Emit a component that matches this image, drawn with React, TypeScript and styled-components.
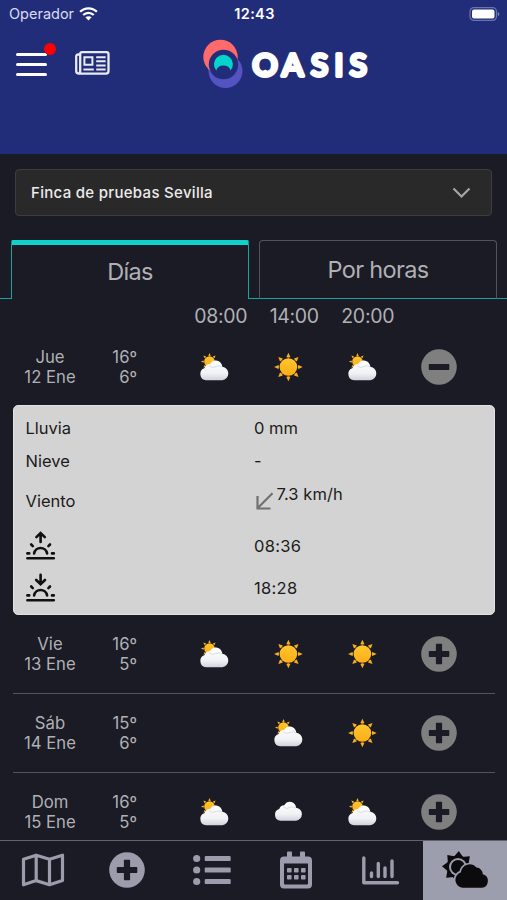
import React from "react";
import styled, { createGlobalStyle, css } from "styled-components";

const colors = {
  brand: "#222d7a",
  page: "#1a1b24",
  text: "#b0b0b5",
  cyan: "#0fd3cb",
  cyanLine: "#1ba39f",
  line: "#53535d",
  nav: "#9b9cac",
  panel: "#d3d3d3",
};

const GlobalStyle = createGlobalStyle`
  * { box-sizing: border-box; }
  body { margin: 0; background: ${colors.page}; }
  button { font: inherit; color: inherit; background: none; border: 0; padding: 0; }
  svg { display: block; }
`;

const Screen = styled.div`
  width: 507px;
  height: 900px;
  overflow: hidden;
  display: flex;
  flex-direction: column;
  background: ${colors.page};
  color: ${colors.text};
  font-family: Inter, "Liberation Sans", sans-serif;
`;

const Header = styled.header`
  height: 154px;
  flex: none;
  background: ${colors.brand};
`;

const StatusBar = styled.div`
  height: 27px;
  padding: 0 7px 0 9px;
  display: grid;
  grid-template-columns: 1fr auto 1fr;
  align-items: center;
  color: #fff;
`;

const Carrier = styled.div`
  display: flex;
  align-items: center;
  gap: 5px;
  font-size: 14.5px;
  color: #d9dcf0;
`;

const Clock = styled.div`
  font-size: 14.5px;
  font-weight: 600;
  letter-spacing: 0.35px;
`;

const BatteryBox = styled.div`
  display: flex;
  justify-content: flex-end;
`;

const Toolbar = styled.div`
  height: 74px;
  padding-left: 16px;
  display: flex;
  align-items: center;
`;

const MenuButton = styled.button`
  position: relative;
  width: 31px;
  height: 23px;
  display: flex;
  flex-direction: column;
  justify-content: space-between;
`;

const MenuLine = styled.span`
  height: 3px;
  border-radius: 2px;
  background: #fff;
`;

const Alert = styled.span`
  position: absolute;
  left: 28px;
  top: -10px;
  width: 12px;
  height: 12px;
  border-radius: 50%;
  background: #fe0002;
`;

const NewsButton = styled.button`
  margin: -2px 0 0 28px;
`;

const Logo = styled.div`
  margin-left: 90px;
`;

const Selector = styled.button`
  flex: none;
  width: 477px;
  height: 47px;
  margin: 15px 0 0 15px;
  padding: 0 20px 0 15px;
  display: flex;
  align-items: center;
  justify-content: space-between;
  border: 1px solid #3d3d3f;
  border-radius: 4px;
  background: #29292a;
`;

const SelectorText = styled.span`
  font-size: 15px;
  font-weight: 500;
  color: #ececec;
  letter-spacing: 0.3px;
`;

const TabBar = styled.div`
  flex: none;
  height: 59px;
  margin-top: 24px;
  display: flex;
`;

const TabSpace = styled.span<{ $grow?: boolean; $width?: number }>`
  ${(p) => (p.$grow ? "flex: 1;" : `width: ${p.$width}px;`)}
  border-bottom: 1px solid ${colors.cyanLine};
`;

const Tab = styled.button<{ $active?: boolean }>`
  width: 238px;
  font-size: 23.5px;
  letter-spacing: -0.65px;
  border: 1px solid ${colors.line};
  border-bottom-color: ${colors.cyanLine};
  border-radius: 4px 4px 0 0;
  ${(p) =>
    p.$active &&
    css`
      padding-bottom: 2px;
      border-color: ${colors.cyanLine};
      border-top: 5px solid ${colors.cyan};
      border-bottom: 0;
      border-radius: 2px 2px 0 0;
    `}
`;

const Hours = styled.div`
  flex: none;
  height: 30px;
  padding: 3px 0 0 184px;
  display: grid;
  grid-template-columns: repeat(3, 73.5px);
  align-items: center;
  text-align: center;
  font-size: 19.5px;
  letter-spacing: -0.3px;
`;

const Forecast = styled.div`
  flex: 1;
  min-height: 0;
  overflow: hidden;
  padding: 0 12px 0 13px;
`;

const DayRow = styled.div<{ $divided?: boolean; $first?: boolean }>`
  height: ${(p) => (p.$first ? 76 : p.$divided ? 79 : 78)}px;
  display: grid;
  grid-template-columns: 74px 50px 40px repeat(3, 74px) 80px;
  align-items: center;
  border-bottom: ${(p) => (p.$divided ? `1px solid ${colors.line}` : "0")};
`;

const Stack = styled.div<{ $right?: boolean }>`
  text-align: ${(p) => (p.$right ? "right" : "center")};
  font-size: 16.7px;
  line-height: 20.5px;
  white-space: pre-line;
`;

const Slot = styled.div`
  display: flex;
  justify-content: center;
`;

const Toggle = styled.button`
  justify-self: center;
`;

const Details = styled.section`
  height: 210px;
  padding: 5px 12px 8px 11.5px;
  border-radius: 5px;
  background: ${colors.panel};
  border: 1px solid #e2e2e4;
  color: #1b1b1b;
  font-size: 16.5px;
  display: grid;
  grid-template-columns: 228.5px 1fr;
  grid-template-rows: 33px 33px 47px 43px 42px;
  align-items: center;
`;

const Time = styled.span`
  letter-spacing: 0.3px;
`;

const Wind = styled.div`
  display: flex;
  align-items: flex-start;
  height: 33px;
  gap: 2.5px;
  letter-spacing: 0.1px;
  svg { margin-top: 8px; }
`;

const NavBar = styled.nav`
  flex: none;
  height: 60px;
  border-top: 1px solid #62626c;
  display: grid;
  grid-template-columns: repeat(6, 1fr);
`;

const NavItem = styled.button<{ $active?: boolean }>`
  display: flex;
  align-items: center;
  justify-content: center;
  padding-left: 1px;
  padding-bottom: 1px;
  color: ${(p) => (p.$active ? "#0b0b0d" : colors.nav)};
  background: ${(p) => (p.$active ? "#9c9dad" : "transparent")};
`;

const WifiIcon = () => (
  <svg width="19" height="14" viewBox="0 0 19 14" fill="none" stroke="#fff" strokeWidth="2.3">
    <path d="M1.1 4.8C5.8.1 13.2.1 17.9 4.8" />
    <path d="M4.2 8C7.2 5.1 11.8 5.1 14.8 8" />
    <path d="M9.5 13.5 6.4 10.3C8.2 8.8 10.8 8.8 12.6 10.3Z" fill="#fff" stroke="none" />
  </svg>
);

const BatteryIcon = () => (
  <svg width="31" height="14" viewBox="0 0 31 14">
    <rect x="1" y=".6" width="26.5" height="12.8" rx="4" fill="none" stroke="#6c74ab" strokeWidth="1.2" />
    <rect x="3" y="2.5" width="22.5" height="9" rx="2" fill="#fff" />
    <path d="M28.8 4.7q3 2.3 0 4.6z" fill="#8288b6" />
  </svg>
);

const NewsIcon = () => (
  <svg width="35" height="24" viewBox="0 0 35 24" fill="none" stroke="#e8eaf8" strokeWidth="2.3">
    <path d="M5 3.5H3.2Q1.2 3.5 1.2 5.5V20Q1.2 22.6 4 22.6H31Q33.5 22.6 33.5 20V3Q33.5 1.2 31.5 1.2H7Q5.2 1.2 5.2 3V20Q5.2 22.6 3.5 22.6" />
    <path d="M9.4 6.2h8v7.5h-8zM8.4 18.4h10.4M21.2 6.2h9.4M21.2 10.3h9.4M21.2 14.4h9.4M21.2 18.4h9.4" strokeWidth="2" />
  </svg>
);

const OasisLogo = () => (
  <svg width="168" height="52" viewBox="0 0 168 52">
    <circle cx="25.5" cy="33" r="17" fill="#5453c2" />
    <circle cx="20.5" cy="19" r="17.2" fill="#ff6a6c" />
    <circle cx="23.5" cy="26.5" r="14.7" fill={colors.brand} />
    <path d="M16.2 32.5A9.5 9.5 0 1 1 30.6 32.5 7.5 6.8 0 0 0 16.2 32.5Z" fill="#04d4cb" />
    <g transform="translate(-2 0) scale(1.045 1)" fill="#fff">
      <text
        y="37.6"
        x="52.2 80.5 108.2 130.7 145.2"
        fontFamily="Lato, sans-serif"
        fontWeight="400"
        fontSize="30"
        stroke="#fff"
        strokeWidth="4"
        strokeLinejoin="round"
      >
        OASIS
      </text>
      <path d="M58.4 37v-3.2q2-2.4 3.800-1 2.200-2.200 4.400 0 2-1.400 3.800 1V37z" />
    </g>
  </svg>
);

const ChevronIcon = () => (
  <svg width="19" height="12" viewBox="0 0 19 12" fill="none" stroke="#a5a5a6" strokeWidth="2.2">
    <path d="m1.5 1.5 8 8 8-8" />
  </svg>
);

const WeatherDefs = () => (
  <svg width="0" height="0">
    <defs>
      <linearGradient id="sunFill" x1="0" y1="0" x2="0" y2="1">
        <stop offset="0" stopColor="#ffc52e" />
        <stop offset="1" stopColor="#ffad16" />
      </linearGradient>
      <linearGradient id="cloudFill" x1="0" y1="0" x2="0" y2="1">
        <stop offset="0" stopColor="#ffffff" />
        <stop offset=".65" stopColor="#f1f2f5" />
        <stop offset="1" stopColor="#cfd3dc" />
      </linearGradient>
    </defs>
  </svg>
);

const SunShape = () => (
  <>
    {[0, 45, 90, 135, 180, 225, 270, 315].map((angle) => (
      <path key={angle} d="M-2 -9.9 0 -14.3 2 -9.9Q0 -8.8 -2 -9.9Z" fill="#f6ad25" transform={`rotate(${angle})`} />
    ))}
    <circle r="8.8" fill="url(#sunFill)" />
  </>
);

const CloudShape = () => (
  <>
    <path
      d="M6.6 26.7A6.2 6.2 0 0 1 5.2 14.6 5.6 5.6 0 0 1 10.4 10.6Q13.3 6.3 17.9 7.3 22 8.5 22.9 13.2A6.8 6.8 0 0 1 22.8 26.7Z"
      fill="url(#cloudFill)"
    />
    <path d="M9.5 12.3Q12.5 15.5 17.2 12.8 20.3 11.5 22.7 13.7" fill="none" stroke="#d7d9df" strokeWidth=".9" />
  </>
);

type Weather = "sun" | "partly" | "cloud" | "none";

const WeatherIcon = ({ kind }: { kind: Weather }) => {
  if (kind === "none") return null;
  return (
    <svg width="30" height="30" viewBox="0 0 30 30">
      {kind === "sun" && (
        <g transform="translate(15.4 15)">
          <SunShape />
        </g>
      )}
      {kind === "partly" && (
        <>
          <g transform="translate(10.5 9.6) scale(.6)">
            <SunShape />
          </g>
          <g transform="translate(.5 1.5)">
            <CloudShape />
          </g>
        </>
      )}
      {kind === "cloud" && (
        <g transform="translate(1.2 -2) scale(.96)">
          <CloudShape />
        </g>
      )}
    </svg>
  );
};

const RoundIcon = ({ minus, fill }: { minus?: boolean; fill: string }) => (
  <svg width="36" height="36" viewBox="0 0 36 36">
    <circle cx="18" cy="18" r="17.8" fill={fill} />
    <rect x="7.8" y="14.9" width="20.5" height="6.2" rx=".8" fill={colors.page} />
    {!minus && <rect x="14.9" y="7.8" width="6.2" height="20.5" rx=".8" fill={colors.page} />}
  </svg>
);

const HorizonIcon = ({ down }: { down?: boolean }) => (
  <svg width="30" height="30" viewBox="0 0 30 30" fill="none" stroke="#101010" strokeWidth="2.6" strokeLinecap="round">
    <path d="M1.4 27.3h26.4M1.4 22.4h1.8M26 22.4h1.8M5.2 13.5l1.600 1.600M24 13.5l-1.600 1.600" />
    <path d="M8.100 22.5a6.600 6.600 0 0 1 13 0" />
    <path d={down ? "M14.6 1.8v9M10.2 7l4.4 4.2L19 7" : "M14.6 11V2.4M10.4 6.2 14.6 2l4.2 4.2"} />
  </svg>
);

const WindArrow = () => (
  <svg width="20" height="19" viewBox="0 0 20 19" fill="none" stroke="#707070" strokeWidth="2.2">
    <path d="M18.5 1.2 3.5 16.2M3.5 4v12.5h13" />
  </svg>
);

const MapIcon = () => (
  <svg width="44" height="34" viewBox="0 0 44 34" fill="none" stroke="currentColor" strokeWidth="3.2" strokeLinejoin="round">
    <path d="M2.5 6.3 15.2 2.2 28.5 6.3 41.5 2.2V27.6L28.5 31.8 15.2 27.6 2.5 31.8ZM15.2 2.2v25.4M28.5 6.3v25.5" />
  </svg>
);

const ListIcon = () => (
  <svg width="38" height="32" viewBox="0 0 38 32" fill="currentColor">
    {[4.5, 16, 27.5].map((y) => (
      <React.Fragment key={y}>
        <circle cx="3.7" cy={y} r="3.6" />
        <rect x="11.7" y={y - 2.6} width="26" height="5.2" rx="1.2" />
      </React.Fragment>
    ))}
  </svg>
);

const CalendarIcon = () => (
  <svg width="34" height="38" viewBox="0 0 34 38" fill="currentColor">
    <path
      fillRule="evenodd"
      d="M8 1.5Q8 .6 9 .6h3q1 0 1 1v4h8v-4q0-1 1-1h3q1 0 1 1v4h3q4 0 4 4v24q0 4-4 4H5q-4 0-4-4v-24q0-4 4-4h3zM5 12.5v20q0 1 1 1h22q1 0 1-1v-20z"
    />
    {[17, 24].map((y) =>
      [8, 15, 22].map((x) => <rect key={`${x}-${y}`} x={x} y={y} width="4.6" height="4.6" rx=".8" />)
    )}
  </svg>
);

const ChartIcon = () => (
  <svg width="38" height="29" viewBox="0 0 38 29" fill="none" stroke="currentColor" strokeWidth="3.4" strokeLinecap="round">
    <path d="M1.8 2v24.7H35.500" strokeLinejoin="round" />
    <path d="M9.5 17v3.5M16.3 7.5v13M23 12v8.5M30 5v15.5" />
  </svg>
);

const CloudSunIcon = () => (
  <svg width="48" height="40" viewBox="0 0 48 40">
    {[0, 45, 90, 135, 180, 225, 270, 315].map((angle) => (
      <path key={angle} d="M-5-9.5 0-16 5-9.5Z" fill="#0b0b0d" transform={`translate(17 17) rotate(${angle + 3})`} />
    ))}
    <circle cx="17" cy="17" r="11.4" fill="#0b0b0d" />
    <circle cx="17" cy="17" r="9" fill="#9c9dad" />
    <circle cx="17" cy="17" r="7" fill="#0b0b0d" />
    <path
      d="M21.5 37.8A8 8 0 0 1 20 22.2 8.8 8.8 0 0 1 35.5 17.6 6.7 6.7 0 0 1 41.8 24.3 6.9 6.9 0 0 1 40.8 37.8Z"
      fill="#0b0b0d"
      stroke="#9c9dad"
      strokeWidth="3.4"
      paintOrder="stroke"
    />
  </svg>
);

interface Day {
  name: string;
  temps: string;
  sky: Weather[];
}

const today: Day = { name: "Jue\n12 Ene", temps: "16º\n6º", sky: ["partly", "sun", "partly"] };
const nextDays: Day[] = [
  { name: "Vie\n13 Ene", temps: "16º\n5º", sky: ["partly", "sun", "sun"] },
  { name: "Sáb\n14 Ene", temps: "15º\n6º", sky: ["none", "partly", "sun"] },
  { name: "Dom\n15 Ene", temps: "16º\n5º", sky: ["partly", "cloud", "partly"] },
];

const ForecastDay = ({ day, open, divided }: { day: Day; open?: boolean; divided?: boolean }) => (
  <DayRow $divided={divided} $first={open}>
    <Stack>{day.name}</Stack>
    <Stack $right>{day.temps}</Stack>
    <span />
    {day.sky.map((kind, i) => (
      <Slot key={i}>
        <WeatherIcon kind={kind} />
      </Slot>
    ))}
    <Toggle>
      <RoundIcon minus={open} fill="#7f7f80" />
    </Toggle>
  </DayRow>
);

export default function App() {
  return (
    <Screen>
      <GlobalStyle />
      <Header>
        <StatusBar>
          <Carrier>
            Operador <WifiIcon />
          </Carrier>
          <Clock>12:43</Clock>
          <BatteryBox>
            <BatteryIcon />
          </BatteryBox>
        </StatusBar>
        <Toolbar>
          <MenuButton>
            <MenuLine />
            <MenuLine />
            <MenuLine />
            <Alert />
          </MenuButton>
          <NewsButton>
            <NewsIcon />
          </NewsButton>
          <Logo>
            <OasisLogo />
          </Logo>
        </Toolbar>
      </Header>
      <Selector>
        <SelectorText>Finca de pruebas Sevilla</SelectorText>
        <ChevronIcon />
      </Selector>
      <TabBar>
        <TabSpace $width={11} />
        <Tab $active>Días</Tab>
        <TabSpace $width={10} />
        <Tab>Por horas</Tab>
        <TabSpace $grow />
      </TabBar>
      <Hours>
        <span>08:00</span>
        <span>14:00</span>
        <span>20:00</span>
      </Hours>
      <Forecast>
        <WeatherDefs />
        <ForecastDay day={today} open />
        <Details>
          <span>Lluvia</span>
          <span>0 mm</span>
          <span>Nieve</span>
          <span>-</span>
          <span>Viento</span>
          <Wind>
            <WindArrow />
            7.3 km/h
          </Wind>
          <HorizonIcon />
          <Time>08:36</Time>
          <HorizonIcon down />
          <Time>18:28</Time>
        </Details>
        {nextDays.map((day, i) => (
          <ForecastDay key={day.name} day={day} divided={i < 2} />
        ))}
      </Forecast>
      <NavBar>
        <NavItem>
          <MapIcon />
        </NavItem>
        <NavItem>
          <RoundIcon fill={colors.nav} />
        </NavItem>
        <NavItem>
          <ListIcon />
        </NavItem>
        <NavItem>
          <CalendarIcon />
        </NavItem>
        <NavItem>
          <ChartIcon />
        </NavItem>
        <NavItem $active>
          <CloudSunIcon />
        </NavItem>
      </NavBar>
    </Screen>
  );
}
